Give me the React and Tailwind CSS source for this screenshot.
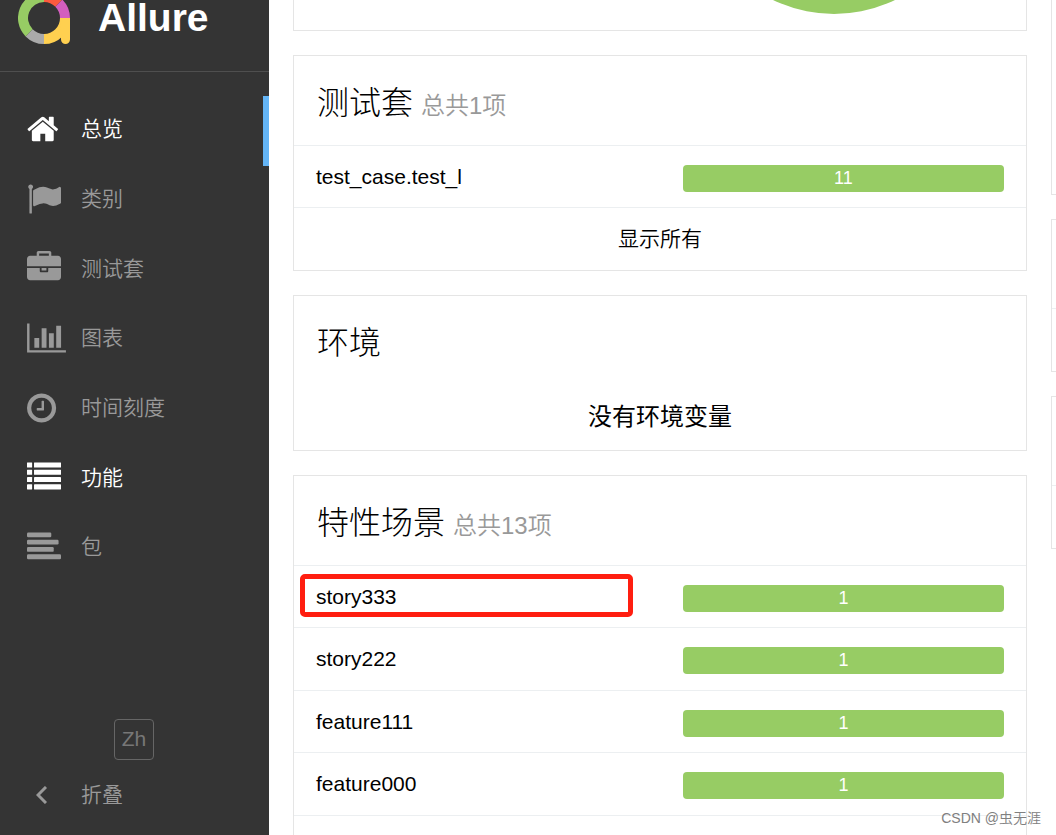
const HomeIcon = () => (
  <svg viewBox="0 0 1792 1792" className="h-[34px] w-[34px]" fill="currentColor" aria-hidden="true">
    <g transform="translate(-64 0)">
      <path d="M1472 992v480q0 26-19 45t-45 19h-384v-384h-256v384h-384q-26 0-45-19t-19-45v-480q0-1 .5-3t.5-3l575-474 575 474q1 2 1 6zm223-69l-62 74q-8 9-21 11h-3q-13 0-21-7l-692-577-692 577q-12 8-24 7-13-2-21-11l-62-74q-8-10-7-23.5t11-21.5l719-599q32-26 76-26t76 26l244 204v-195q0-14 9-23t23-9h192q14 0 23 9t9 23v408l219 182q10 8 11 21.5t-7 23.5z" />
    </g>
  </svg>
);

const FlagIcon = () => (
  <svg viewBox="0 0 1792 1792" className="h-[34px] w-[34px]" fill="currentColor" aria-hidden="true">
    <path d="M320 256q0 72-64 110v1266q0 13-9.500 22.500t-22.500 9.500h-64q-13 0-22.500-9.500t-9.500-22.500v-1266q-64-38-64-110 0-53 37.500-90.500t90.500-37.500 90.500 37.500 37.500 90.500zm1472 64v763q0 25-12.500 38.500t-39.500 27.500q-215 116-369 116-61 0-123.500-22t-108.500-48-115.500-48-142.500-22q-192 0-464 146-17 9-33 9-26 0-45-19t-19-45v-742q0-32 31-55 21-14 79-43 236-120 421-120 107 0 200 29t219 88q38 19 88 19 54 0 117.500-21t110-47 88-47 54.500-21q26 0 45 19t19 45z" />
  </svg>
);

const BriefcaseIcon = () => (
  <svg viewBox="0 0 1792 1792" className="h-[34px] w-[34px]" fill="currentColor" aria-hidden="true">
    <path d="M640 256h512v-128h-512v128zm1152 640v480q0 66-47 113t-113 47h-1472q-66 0-113-47t-47-113v-480h672v160q0 26 19 45t45 19h320q26 0 45-19t19-45v-160h672zm-768 0v128h-256v-128h256zm768-480v384h-1792v-384q0-66 47-113t113-47h352v-160q0-40 28-68t68-28h576q40 0 68 28t28 68v160h352q66 0 113 47t47 113z" />
  </svg>
);

const ChartIcon = () => (
  <svg viewBox="0 0 2048 1792" className="h-[34px] w-[39px]" fill="currentColor" aria-hidden="true">
    <path d="M640 896v512h-256v-512h256zm384-512v1024h-256v-1024h256zm1024 1152v128h-2048v-1536h128v1408h1920zm-640-896v768h-256v-768h256zm384-384v1152h-256v-1152h256z" />
  </svg>
);

const ClockIcon = () => (
  <svg viewBox="128 0 1792 1792" className="h-[34px] w-[34px]" fill="currentColor" aria-hidden="true">
    <path d="M1024 544v448q0 14-9 23t-23 9h-320q-14 0-23-9t-9-23v-64q0-14 9-23t23-9h224v-352q0-14 9-23t23-9h64q14 0 23 9t9 23zm416 352q0-148-73-273t-198-198-273-73-273 73-198 198-73 273 73 273 198 198 273 73 273-73 198-198 73-273zm224 0q0 209-103 385.500t-279.500 279.500-385.500 103-385.500-103-279.500-279.500-103-385.500 103-385.500 279.500-279.500 385.500-103 385.500 103 279.500 279.500 103 385.500z" />
  </svg>
);

const ListIcon = () => (
  <svg viewBox="0 0 1792 1792" className="h-[34px] w-[34px]" fill="currentColor" aria-hidden="true">
    {[128, 512, 896, 1280].map((y) => (
      <g key={y}>
        <rect x="0" y={y} width="270" height="270" rx="20" />
        <rect x="370" y={y} width="1422" height="270" rx="20" />
      </g>
    ))}
  </svg>
);

const AlignIcon = () => (
  <svg viewBox="0 0 1792 1792" className="h-[34px] w-[34px]" fill="currentColor" aria-hidden="true">
    <rect y="128" width="1280" height="256" rx="64" />
    <rect y="512" width="1664" height="256" rx="64" />
    <rect y="896" width="1408" height="256" rx="64" />
    <rect y="1280" width="1792" height="256" rx="64" />
  </svg>
);

const Logo = () => (
  <svg viewBox="0 0 52 52" className="h-[52px] w-[52px]" fill="none" strokeWidth="10" aria-hidden="true">
    <path d="M11.150 40.850A21 21 0 0 1 26 5" stroke="#97cc64" />
    <path d="M26 5A21 21 0 0 1 40.850 11.150" stroke="#fd5a3e" />
    <path d="M40.850 11.150A21 21 0 0 1 47 26" stroke="#d35ebe" />
    <path d="M26 47A21 21 0 0 1 11.150 40.850" stroke="#aaaaaa" />
    <path d="M47 26A21 21 0 0 1 26 47" stroke="#ffd050" />
    <path d="M42 26h10v21.500a4.500 4.500 0 0 1-9 0V38z" fill="#ffd050" stroke="none" />
  </svg>
);

const menu = [
  { label: "总览", icon: HomeIcon, lit: true, current: true },
  { label: "类别", icon: FlagIcon },
  { label: "测试套", icon: BriefcaseIcon },
  { label: "图表", icon: ChartIcon },
  { label: "时间刻度", icon: ClockIcon },
  { label: "功能", icon: ListIcon, lit: true },
  { label: "包", icon: AlignIcon },
];

const suites = [{ name: "test_case.test_l", passed: 11 }];

const features = [
  { name: "story333", passed: 1, marked: true },
  { name: "story222", passed: 1 },
  { name: "feature111", passed: 1 },
  { name: "feature000", passed: 1 },
];

function Sidebar() {
  return (
    <aside className="flex w-[269px] shrink-0 flex-col bg-[#343434] text-[21px] text-[#999]">
      <a href="#" className="flex h-[72px] items-start border-b border-[#4f4f4f] pl-[18px] text-white">
        <span className="-mt-2">
          <Logo />
        </span>
        <span className="ml-7 text-[39px] leading-9 font-bold">Allure</span>
      </a>

      <nav className="mt-6">
        <ul className="flex h-[488px] flex-col">
          {menu.map(({ label, icon: Icon, lit, current }) => (
            <li key={label} className="flex-1">
              <a
                href="#"
                className={`flex h-full items-center border-r-[6px] pb-1 pl-[27px] font-[350] ${
                  current ? "border-[#64b5f6]" : "border-transparent"
                } ${lit ? "text-white" : ""}`}
              >
                <span className="w-[54px]">
                  <Icon />
                </span>
                {label}
              </a>
            </li>
          ))}
        </ul>
      </nav>

      <div className="mt-auto flex flex-col pb-6">
        <button className="mr-px h-[41px] w-10 self-center rounded border border-[#666] pb-px text-[21px] text-[#777]">
          Zh
        </button>
        <button className="mt-[19px] flex h-8 items-center pl-9 font-[350]">
          <span className="w-[45px]">
            <svg viewBox="0 0 11 18" className="h-[18px] w-[11px]" fill="none" stroke="currentColor" strokeWidth="3" aria-hidden="true">
              <path d="M10 1L2 9l8 8" />
            </svg>
          </span>
          折叠
        </button>
      </div>
    </aside>
  );
}

function CardTitle({ title, total }) {
  return (
    <h2 className="flex h-[89px] items-baseline gap-2 pt-[25px] pl-[23px] text-[32px] leading-[44px] font-light">
      {title}
      {total && <span className="text-2xl font-[350] text-[#999]">{total}</span>}
    </h2>
  );
}

function Rows({ items }) {
  return items.map((item) => (
    <li key={item.name} className="relative h-[62px] border-t border-[#eceff1] even:h-[63px]">
      <a href="#" className="grid h-full grid-cols-[8fr_7fr] items-center pr-[22px] pl-[22px]">
        <span>{item.name}</span>
        <span className="mt-[3px] h-[27px] rounded bg-[#97cc64] text-center text-lg leading-[26px] text-white">
          {item.passed}
        </span>
      </a>
      {item.marked && (
        <span className="absolute top-2 left-1.5 h-[43px] w-[333px] rounded-[5px] border-[5px] border-[#ff1e10]" />
      )}
    </li>
  ));
}

export default function App() {
  return (
    <div className="relative flex h-screen overflow-hidden bg-white font-['Liberation_Sans','Noto_Sans_CJK_SC',sans-serif] text-[21px] text-black">
      <Sidebar />

      <main className="flex min-w-0 flex-1 gap-6 overflow-hidden pl-6">
        <div className="flex min-w-0 flex-1 flex-col gap-6">
          {/* Summary, scrolled mostly out of view */}
          <section className="flex h-[31px] shrink-0 justify-end border border-t-0 border-[#e5e5e5] pr-[52px]">
            <svg viewBox="0 266 280 14" className="h-[14px] w-[280px]" aria-hidden="true">
              <circle cx="140" cy="140" r="140" fill="#97cc64" />
            </svg>
          </section>

          <section className="shrink-0 border border-[#e5e5e5]">
            <CardTitle title="测试套" total="总共1项" />
            <ul>
              <Rows items={suites} />
              <li className="h-[63px] border-t border-[#eceff1]">
                <a href="#" className="flex h-full items-center justify-center font-[350]">
                  显示所有
                </a>
              </li>
            </ul>
          </section>

          <section className="shrink-0 border border-[#e5e5e5]">
            <CardTitle title="环境" />
            <p className="h-[65px] pt-4 text-center text-2xl">没有环境变量</p>
          </section>

          <section className="flex-1 border border-b-0 border-[#e5e5e5]">
            <CardTitle title="特性场景" total="总共13项" />
            <ul className="border-b border-[#eceff1]">
              <Rows items={features} />
            </ul>
          </section>
        </div>

        {/* Second column runs off the right edge */}
        <div className="-mr-[729px] flex w-[734px] shrink-0 flex-col gap-6">
          <section className="h-[195px] border border-t-0 border-[#e5e5e5]" />
          <section className="h-[153px] border border-[#e5e5e5]">
            <div className="h-[89px] border-b border-[#eceff1]" />
          </section>
          <section className="h-[153px] border border-[#e5e5e5]">
            <div className="h-[89px] border-b border-[#eceff1]" />
          </section>
        </div>
      </main>

      <span className="absolute right-[15px] bottom-[5px] text-sm leading-6 font-[350] text-[#808080]">
        CSDN @虫无涯
      </span>
    </div>
  );
}
